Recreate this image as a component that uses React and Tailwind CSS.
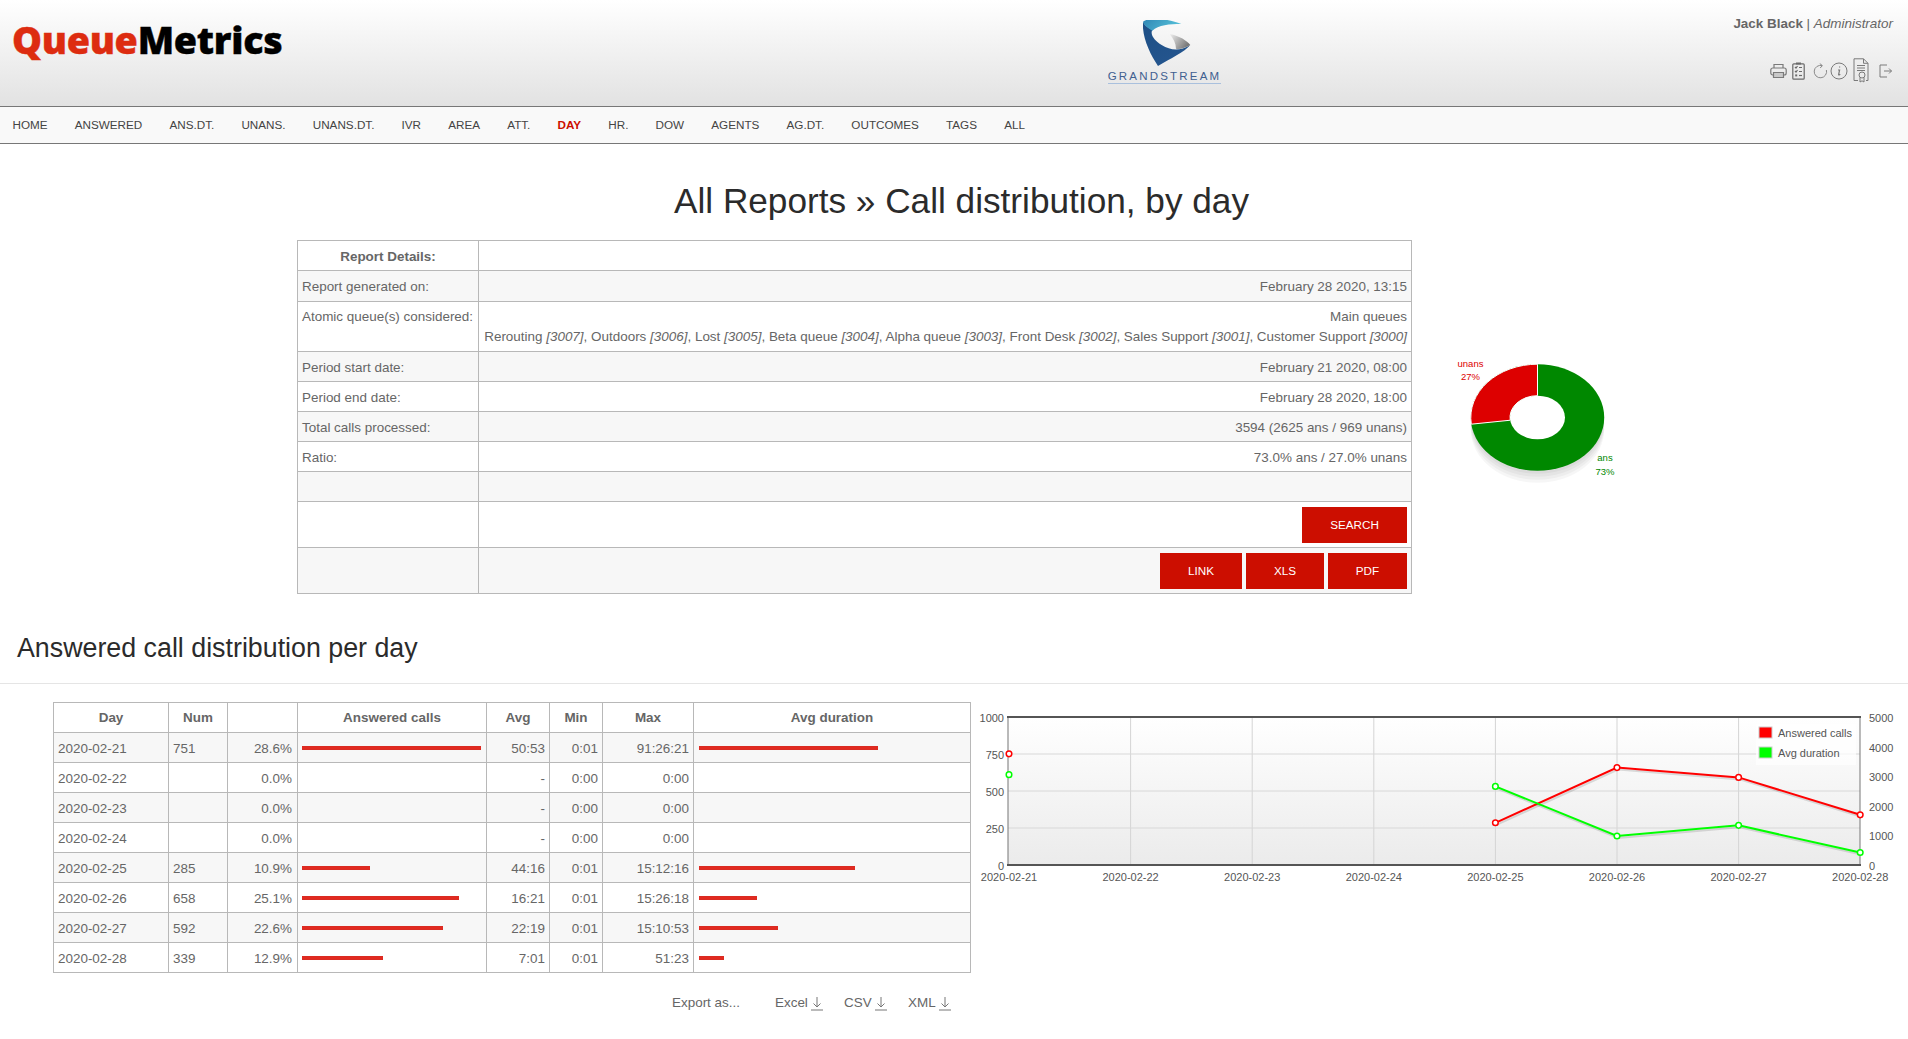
import React from 'react';

const navItems = ['HOME', 'ANSWERED', 'ANS.DT.', 'UNANS.', 'UNANS.DT.', 'IVR', 'AREA', 'ATT.', 'DAY', 'HR.', 'DOW', 'AGENTS', 'AG.DT.', 'OUTCOMES', 'TAGS', 'ALL'];

const days = [
    { day: '2020-02-21', num: 751, pct: '28.6%', avg: '50:53', min: '0:01', max: '91:26:21', sec: 3053 },
    { day: '2020-02-22', num: null, pct: '0.0%', avg: '-', min: '0:00', max: '0:00', sec: 0 },
    { day: '2020-02-23', num: null, pct: '0.0%', avg: '-', min: '0:00', max: '0:00', sec: 0 },
    { day: '2020-02-24', num: null, pct: '0.0%', avg: '-', min: '0:00', max: '0:00', sec: 0 },
    { day: '2020-02-25', num: 285, pct: '10.9%', avg: '44:16', min: '0:01', max: '15:12:16', sec: 2656 },
    { day: '2020-02-26', num: 658, pct: '25.1%', avg: '16:21', min: '0:01', max: '15:26:18', sec: 981 },
    { day: '2020-02-27', num: 592, pct: '22.6%', avg: '22:19', min: '0:01', max: '15:10:53', sec: 1339 },
    { day: '2020-02-28', num: 339, pct: '12.9%', avg: '7:01', min: '0:01', max: '51:23', sec: 421 },
];

const PrintIcon = () => (
    <svg width="17" height="16" viewBox="0 0 17 16" fill="none" stroke="#7a7a7a" strokeWidth="1.2">
        <path d="M4 5V1.5h9V5" />
        <rect x="0.8" y="5" width="15.4" height="7" rx="2" />
        <path d="M3.5 9.5h10v5h-10z" fill="#c9c9c9" />
    </svg>
);

const ClipboardIcon = () => (
    <svg width="13" height="18" viewBox="0 0 13 18" fill="none" stroke="#6a6a6a" strokeWidth="1.2">
        <rect x="0.8" y="1.8" width="11.4" height="15.4" rx="1" />
        <path d="M4 1.5h5" strokeWidth="2" />
        <path d="M3 5l1 1 1.5-2M3 9l1 1 1.5-2M7 5.5h3M7 9.5h3" />
        <rect x="3.2" y="12.4" width="2" height="2" fill="#6a6a6a" stroke="none" />
        <path d="M7 13.5h3" />
    </svg>
);

const RefreshIcon = () => (
    <svg width="15" height="16" viewBox="0 0 15 16" fill="none" stroke="#8a8a8a" strokeWidth="1">
        <path d="M9 2.6A6.2 6.2 0 1 0 13.4 7" />
        <path d="M6.8 0.6L9.4 2.6 7.2 5" />
    </svg>
);

const InfoIcon = () => (
    <svg width="18" height="18" viewBox="0 0 18 18" fill="none" stroke="#7a7a7a" strokeWidth="1">
        <circle cx="9" cy="9" r="8" />
        <path d="M9.6 4.6v1M8 8h1.6L8.6 12.6c0 .6.8.6 1.6-.4" strokeWidth="1.2" />
    </svg>
);

const CertIcon = () => (
    <svg width="16" height="25" viewBox="0 0 16 25" fill="none" stroke="#7a7a7a" strokeWidth="1">
        <path d="M5 22.5H1V.8h9.5l4.5 4.5v17.2h-2" />
        <path d="M10.5.8v4.5H15M4 7.5h8M4 10h8M4 12.5h8" />
        <circle cx="9" cy="17" r="3" />
        <path d="M7 19.5v4.5l2-1.2 2 1.2v-4.5" />
    </svg>
);

const LogoutIcon = () => (
    <svg width="13" height="14" viewBox="0 0 13 14" fill="none" stroke="#7a7a7a" strokeWidth="1">
        <path d="M8 1H1v12h7M5 7h7.5M10 4.5L12.5 7 10 9.5" />
    </svg>
);

const DownloadIcon = () => (
    <svg width="12" height="15" viewBox="0 0 12 15" fill="none" stroke="#777" strokeWidth="1" className="ml-[3px]">
        <path d="M6 1v10M2.5 7.5L6 11l3.5-3.5M0 14h12" />
    </svg>
);

const GrandstreamMark = () => (
    <svg width="47.3" height="46" viewBox="130 30 142 138" className="ml-[5px]">
        <defs>
            <linearGradient id="gsTeal" x1="0" y1="0" x2="1" y2="0.3">
                <stop offset="0" stopColor="#2f86b4" />
                <stop offset="1" stopColor="#55bfd8" />
            </linearGradient>
            <linearGradient id="gsBlue" x1="0" y1="0" x2="0.6" y2="1">
                <stop offset="0" stopColor="#1d4f86" />
                <stop offset="1" stopColor="#24558e" />
            </linearGradient>
            <linearGradient id="gsGrey" x1="0" y1="0" x2="1" y2="0.5">
                <stop offset="0" stopColor="#f0f0f0" />
                <stop offset="1" stopColor="#777" />
            </linearGradient>
        </defs>
        <path d="M130 35C126 78 150 132 175 168C212 146 255 126 272 105C240 124 214 122 186 105C166 92 150 74 158 60C148 53 134 46 130 35Z" fill="url(#gsBlue)" />
        <path d="M130 35C150 20 205 26 245 42C210 42 176 45 158 62C146 55 132 46 130 35Z" fill="url(#gsTeal)" />
        <path d="M210 72C240 78 262 92 272 105C258 113 238 120 229 116C229 100 221 86 210 72Z" fill="url(#gsGrey)" />
    </svg>
);

const polar = (cx, cy, rx, ry, deg) => {
    const a = (deg * Math.PI) / 180;
    return [cx - rx * Math.sin(a), cy - ry * Math.cos(a)];
};

const PieChart = () => {
    const cx = 97.5;
    const cy = 67.5;
    const [ox, oy] = polar(cx, cy, 66.7, 53.3, 97.2);
    const [ix, iy] = polar(cx, cy, 27.5, 21.8, 97.2);
    return (
        <svg width="200" height="145" className="ml-[28px] mt-[110px] shrink-0" style={{ fontFamily: '"Liberation Sans", sans-serif' }}>
            {[3, 6, 9, 12].map((o) => (
                <ellipse key={o} cx={cx} cy={cy + o} rx="66.7" ry="53.3" fill="#000" opacity="0.035" />
            ))}
            <ellipse cx={cx} cy={cy} rx="66.7" ry="53.3" fill="#008800" />
            <path d={`M${cx} ${cy - 53.3}A66.7 53.3 0 0 0 ${ox} ${oy}L${ix} ${iy}A27.5 21.8 0 0 1 ${cx} ${cy - 21.8}Z`} fill="#dd0000" stroke="#fff" strokeWidth="1" />
            <ellipse cx={cx} cy={cy} rx="27.5" ry="21.8" fill="#fff" />
            <text x="30.5" y="17" textAnchor="middle" fontSize="9.5" fill="#dd0000">unans</text>
            <text x="30.5" y="30" textAnchor="middle" fontSize="9.5" fill="#dd0000">27%</text>
            <text x="165" y="111" textAnchor="middle" fontSize="9.5" fill="#008800">ans</text>
            <text x="165" y="125" textAnchor="middle" fontSize="9.5" fill="#008800">73%</text>
        </svg>
    );
};

const LineChart = () => {
    const xAt = (i) => 34 + 121.6 * i;
    const yLeft = (v) => 165 - v * 0.148;
    const yRight = (v) => 165 - (v / 5000) * 148;
    const filled = days.map((d, i) => ({ ...d, i })).filter((d) => d.num);
    const redPts = filled.slice(1).map((d) => `${xAt(d.i)},${yLeft(d.num)}`).join(' ');
    const greenPts = filled.slice(1).map((d) => `${xAt(d.i)},${yRight(d.sec)}`).join(' ');
    return (
        <svg width="933" height="190" className="ml-[4px] -mt-[2px] shrink-0" style={{ fontFamily: '"Liberation Sans", sans-serif' }} fontSize="11" fill="#555">
            <defs>
                <linearGradient id="plotBg" x1="0" y1="0" x2="0" y2="1">
                    <stop offset="0" stopColor="#ffffff" />
                    <stop offset="1" stopColor="#ebebeb" />
                </linearGradient>
            </defs>
            <rect x="33" y="17" width="852" height="148" fill="url(#plotBg)" />
            {[1, 2, 3, 4, 5, 6].map((i) => (
                <line key={i} x1={xAt(i)} x2={xAt(i)} y1="17" y2="165" stroke="#d4d4d4" />
            ))}
            {[250, 500, 750].map((v) => (
                <line key={v} x1="33" x2="885" y1={yLeft(v)} y2={yLeft(v)} stroke="#d8d8d8" />
            ))}
            <rect x="33" y="17" width="852" height="148" fill="none" stroke="#777" />
            <line x1="32" x2="886" y1="17" y2="17" stroke="#555" strokeWidth="2" />
            <line x1="32" x2="886" y1="165" y2="165" stroke="#555" strokeWidth="2" />
            {[0, 250, 500, 750, 1000].map((v) => (
                <text key={v} x="29" y={yLeft(v) + 5} textAnchor="end">{v}</text>
            ))}
            {[0, 1000, 2000, 3000, 4000, 5000].map((v) => (
                <text key={v} x="894" y={yRight(v) + 5}>{v}</text>
            ))}
            {days.map((d, i) => (
                <text key={d.day} x={xAt(i)} y="181" textAnchor="middle">{d.day}</text>
            ))}
            <polyline points={redPts} fill="none" stroke="#000" strokeOpacity="0.12" strokeWidth="2" transform="translate(1 2)" />
            <polyline points={greenPts} fill="none" stroke="#000" strokeOpacity="0.12" strokeWidth="2" transform="translate(1 2)" />
            <polyline points={redPts} fill="none" stroke="#ff0000" strokeWidth="2" />
            <polyline points={greenPts} fill="none" stroke="#00ff00" strokeWidth="2" />
            {filled.map((d) => (
                <circle key={d.day} cx={xAt(d.i)} cy={yLeft(d.num)} r="2.8" fill="#fff" stroke="#ff0000" strokeWidth="1.5" />
            ))}
            {filled.map((d) => (
                <circle key={d.day} cx={xAt(d.i)} cy={yRight(d.sec)} r="2.8" fill="#fff" stroke="#00ff00" strokeWidth="1.5" />
            ))}
            <rect x="781" y="24" width="100" height="41" fill="#fff" fillOpacity="0.7" />
            <rect x="784" y="27" width="13" height="11" fill="#ff0000" stroke="#ccc" />
            <text x="803" y="37">Answered calls</text>
            <rect x="784" y="47" width="13" height="11" fill="#00ff00" stroke="#ccc" />
            <text x="803" y="57">Avg duration</text>
        </svg>
    );
};

const Bar = ({ width }) => (
    <div className="h-[4px] bg-[#e22a20] border-y border-[#d92b22]" style={{ width }} />
);

const ReportRow = ({ label, value, height, alt, top, plain }) => (
    <tr className={`${height} ${alt ? 'bg-[#f7f7f7]' : 'bg-white'}`}>
        <td className={`border border-[#b8b8b8] px-[4px] ${top ? 'align-top pt-[5px]' : 'pt-[3px]'}`}>{label}</td>
        <td className={`border border-[#b8b8b8] px-[4px] text-right ${plain ? '' : 'pt-[3px]'}`}>{value}</td>
    </tr>
);

const RedButton = ({ children, width }) => (
    <button className={`${width} h-[36px] bg-[#cc0e00] text-white text-[11.7px]`}>{children}</button>
);

const App = () => {
    return (
        <div className="min-h-[1039px] bg-white text-[#666] text-[13.45px] overflow-hidden" style={{ fontFamily: '"Liberation Sans", Arial, sans-serif' }}>
            <div className="h-[106px] flex bg-gradient-to-b from-white to-[#e2e2e2]">
                <div className="w-[1107px] pl-[12px] pt-[16px] text-[37.7px] leading-[48px] font-extrabold tracking-[-0.3px] [-webkit-text-stroke:0.4px]" style={{ fontFamily: '"Open Sans", sans-serif' }}>
                    <span className="text-[#dd2c10]">Queue</span>
                    <span className="text-black">Metrics</span>
                </div>
                <div className="w-[115px] flex flex-col items-center pt-[20px]">
                    <GrandstreamMark />
                    <div className="mt-[5px] text-[11.5px] leading-[10px] tracking-[2.2px] text-[#3f6090] border-b border-[#a9c0dd] pb-[2px] whitespace-nowrap">GRANDSTREAM</div>
                </div>
                <div className="ml-auto pr-[15px] pt-[16px] flex flex-col items-end">
                    <div className="leading-[16px]">
                        <b>Jack Black</b> | <i>Administrator</i>
                    </div>
                    <div className="mt-[26px] mr-[1px] flex items-center h-[25px]">
                        <PrintIcon />
                        <span className="ml-[5px]"><ClipboardIcon /></span>
                        <span className="ml-[8px]"><RefreshIcon /></span>
                        <span className="ml-[2px]"><InfoIcon /></span>
                        <span className="ml-[5px]"><CertIcon /></span>
                        <span className="ml-[10px]"><LogoutIcon /></span>
                    </div>
                </div>
            </div>
            <div className="h-[38px] flex items-center gap-[27.16px] pl-[12.5px] bg-[#f9f9f9] border-y border-[#777] text-[11.7px] text-[#444]">
                {navItems.map((item) => (
                    <span key={item} className={item === 'DAY' ? 'font-bold text-[#cc0e00]' : ''}>{item}</span>
                ))}
            </div>
            <h1 className="mt-[34px] h-[52px] text-center text-[35.2px] leading-[46px] text-[#2b2b2b] pl-[15px]">All Reports » Call distribution, by day</h1>
            <div className="flex pl-[297px] mt-[10px]">
                <table className="w-[1115px] shrink-0 table-fixed border-collapse">
                    <colgroup>
                        <col className="w-[181px]" />
                        <col />
                    </colgroup>
                    <tbody>
                        <tr className="h-[30px] bg-white">
                            <td className="border border-[#b8b8b8] text-center font-bold pt-[3px]">Report Details:</td>
                            <td className="border border-[#b8b8b8]"></td>
                        </tr>
                        <ReportRow height="h-[31px]" alt label="Report generated on:" value="February 28 2020, 13:15" />
                        <ReportRow
                            height="h-[50px]"
                            top
                            plain
                            label="Atomic queue(s) considered:"
                            value={
                                <>
                                    <div className="leading-[20px]">Main queues</div>
                                    <div className="leading-[20px] whitespace-nowrap">
                                        Rerouting <i>[3007]</i>, Outdoors <i>[3006]</i>, Lost <i>[3005]</i>, Beta queue <i>[3004]</i>, Alpha queue <i>[3003]</i>, Front Desk <i>[3002]</i>, Sales Support <i>[3001]</i>, Customer Support <i>[3000]</i>
                                    </div>
                                </>
                            }
                        />
                        <ReportRow height="h-[30px]" alt label="Period start date:" value="February 21 2020, 08:00" />
                        <ReportRow height="h-[30px]" label="Period end date:" value="February 28 2020, 18:00" />
                        <ReportRow height="h-[30px]" alt label="Total calls processed:" value="3594 (2625 ans / 969 unans)" />
                        <ReportRow height="h-[30px]" label="Ratio:" value="73.0% ans / 27.0% unans" />
                        <ReportRow height="h-[30px]" alt label="" value="" />
                        <ReportRow height="h-[46px]" plain label="" value={<RedButton width="w-[105px]">SEARCH</RedButton>} />
                        <ReportRow
                            height="h-[46px]"
                            alt
                            plain
                            label=""
                            value={
                                <div className="flex justify-end gap-[4px]">
                                    <RedButton width="w-[82px]">LINK</RedButton>
                                    <RedButton width="w-[78px]">XLS</RedButton>
                                    <RedButton width="w-[79px]">PDF</RedButton>
                                </div>
                            }
                        />
                    </tbody>
                </table>
                <PieChart />
            </div>
            <h2 className="mt-[36px] pl-[17px] h-[54px] text-[26.8px] leading-[36px] text-[#2b2b2b] border-b border-[#e5e5e5]">Answered call distribution per day</h2>
            <div className="flex items-start pl-[53px] mt-[18px]">
                <table className="w-[918px] shrink-0 table-fixed border-collapse">
                    <colgroup>
                        <col className="w-[115px]" />
                        <col className="w-[59px]" />
                        <col className="w-[70px]" />
                        <col className="w-[189px]" />
                        <col className="w-[63px]" />
                        <col className="w-[53px]" />
                        <col className="w-[91px]" />
                        <col />
                    </colgroup>
                    <thead>
                        <tr className="h-[30px]">
                            {['Day', 'Num', '', 'Answered calls', 'Avg', 'Min', 'Max', 'Avg duration'].map((h, i) => (
                                <th key={i} className="border border-[#b8b8b8] font-bold text-center pt-[1px]">{h}</th>
                            ))}
                        </tr>
                    </thead>
                    <tbody>
                        {days.map((d, i) => (
                            <tr key={d.day} className={`h-[30px] ${i % 2 === 0 ? 'bg-[#f7f7f7]' : 'bg-white'}`}>
                                <td className="border border-[#b8b8b8] px-[4px] pt-[4px]">{d.day}</td>
                                <td className="border border-[#b8b8b8] px-[4px] pt-[4px]">{d.num}</td>
                                <td className="border border-[#b8b8b8] px-[5px] pt-[4px] text-right">{d.pct}</td>
                                <td className="border border-[#b8b8b8] px-[4px]">{d.num && <Bar width={(d.num / 751) * 179} />}</td>
                                <td className="border border-[#b8b8b8] px-[4px] pt-[4px] text-right">{d.avg}</td>
                                <td className="border border-[#b8b8b8] px-[4px] pt-[4px] text-right">{d.min}</td>
                                <td className="border border-[#b8b8b8] px-[4px] pt-[4px] text-right">{d.max}</td>
                                <td className="border border-[#b8b8b8] px-[5px]">{d.num && <Bar width={(d.sec / 3053) * 179} />}</td>
                            </tr>
                        ))}
                    </tbody>
                </table>
                <LineChart />
            </div>
            <div className="flex items-center pl-[672px] mt-[22px] h-[16px]">
                <span className="w-[103px]">Export as...</span>
                <span className="w-[69px] flex items-center">Excel<DownloadIcon /></span>
                <span className="w-[64px] flex items-center">CSV<DownloadIcon /></span>
                <span className="flex items-center">XML<DownloadIcon /></span>
            </div>
        </div>
    );
};

export default App;
